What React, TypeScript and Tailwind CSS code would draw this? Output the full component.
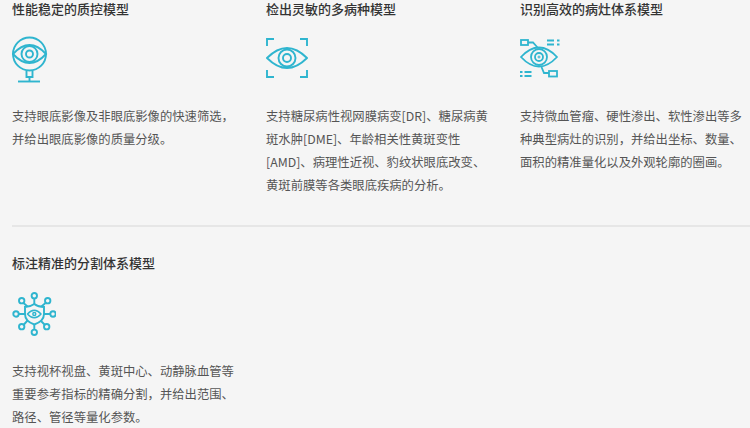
const cyan = '#2fb5cf';

function QualityIcon() {
  return (
    <svg width="38" height="48" viewBox="0 0 38 48" fill="none" stroke={cyan} strokeWidth="1.900">
      <circle cx="17.500" cy="18" r="16.500" />
      <path d="M1 18C6.500 12 12 9 17.500 9S28.500 12 34 18C28.500 24 23 27 17.500 27S6.500 24 1 18Z" />
      <circle cx="17.500" cy="18" r="8" />
      <circle cx="17.500" cy="18" r="3.500" />
      <path d="M14.500 35V41H20.500V35" />
      <path d="M17.500 41V45" />
      <path d="M6 45.500H28" />
    </svg>
  );
}

function ScanIcon() {
  return (
    <svg width="42" height="48" viewBox="0 -2 42 48" fill="none" stroke={cyan} strokeWidth="1.900">
      <path d="M1 8V1H8M34 1H41V8M1 32V39H8M34 39H41V32" />
      <path d="M1 20C8 13 14 10 21 10S34 13 41 20C34 27 28 30 21 30S8 27 1 20Z" />
      <circle cx="21" cy="20" r="8.500" />
      <circle cx="21" cy="20" r="4" />
    </svg>
  );
}

function LesionIcon() {
  return (
    <svg width="40" height="48" viewBox="0 -3 40 48" fill="none" stroke={cyan} strokeWidth="1.800">
      <rect x="1" y="1" width="7" height="5" />
      <path d="M8 3.500H13L18 9" />
      <path d="M27 1.500H34M27 5.500H34M37 1.500H39.500M37 5.500H39.500" />
      <path d="M1 18C7 11.500 13 8.500 19 8.500S31 11.500 37 18C31 24.500 25 27.500 19 27.500S7 24.500 1 18Z" />
      <circle cx="19" cy="18" r="8" />
      <circle cx="19" cy="18" r="4" />
      <circle cx="19" cy="18" r="1" strokeWidth="1" />
      <path d="M21.500 28L24 34H29" />
      <rect x="29" y="32" width="8" height="5.500" />
      <path d="M0 33H2.500M0 37H2.500M4.500 33H11.500M4.500 37H11.500" />
    </svg>
  );
}

function SegmentIcon() {
  return (
    <svg width="44" height="44" viewBox="0 0 44 44" fill="none" stroke={cyan} strokeWidth="1.900">
      <circle cx="22.300" cy="3.700" r="2.700" />
      <circle cx="9.700" cy="8.700" r="2.700" />
      <circle cx="35.700" cy="8.700" r="2.700" />
      <circle cx="4" cy="22" r="2.700" />
      <circle cx="41" cy="22" r="2.700" />
      <circle cx="9.700" cy="34.700" r="2.700" />
      <circle cx="34.700" cy="34.700" r="2.700" />
      <circle cx="22.300" cy="40.300" r="2.700" />
      <path d="M22.300 6.500V12M11.500 11L15.500 14.500M33.500 11L29.500 14.500M6.800 22H13M32 22H38.200M11.500 33L15.500 28.500M33 33L28.500 28.500M22.300 32V37.500" />
      <path d="M22.300 12C25 14 28.500 15 32 15V22C32 27 28 30.500 22.300 32.500C16.500 30.500 13 27 13 22V15C16 15 19.500 14 22.300 12Z" />
      <path d="M15.500 22C18 19 20 18.200 22.300 18.200S26.500 19 29 22C26.500 25 24.500 25.800 22.300 25.800S18 25 15.500 22Z" strokeWidth="1.400" />
      <circle cx="22.300" cy="22" r="1.500" strokeWidth="1.400" />
    </svg>
  );
}

const topItems = [
  {
    title: '性能稳定的质控模型',
    icon: <QualityIcon />,
    lines: ['支持眼底影像及非眼底影像的快速筛选，', '并给出眼底影像的质量分级。'],
  },
  {
    title: '检出灵敏的多病种模型',
    icon: <ScanIcon />,
    lines: [
      '支持糖尿病性视网膜病变[DR]、糖尿病黄',
      '斑水肿[DME]、年龄相关性黄斑变性',
      '[AMD]、病理性近视、豹纹状眼底改变、',
      '黄斑前膜等各类眼底疾病的分析。',
    ],
  },
  {
    title: '识别高效的病灶体系模型',
    icon: <LesionIcon />,
    lines: [
      '支持微血管瘤、硬性渗出、软性渗出等多',
      '种典型病灶的识别，并给出坐标、数量、',
      '面积的精准量化以及外观轮廓的圈画。',
    ],
  },
];

function Lines({ lines }: { lines: string[] }) {
  return (
    <div className="text-[12.33px] leading-[23px] text-[#555555] whitespace-nowrap">
      {lines.map((line) => (
        <p key={line}>{line}</p>
      ))}
    </div>
  );
}

export default function App() {
  return (
    <div
      className="w-[750px] h-[428px] overflow-hidden bg-[#f5f5f5]"
      style={{ fontFamily: '"Noto Sans CJK SC", "Noto Sans", sans-serif' }}
    >
      <div className="h-[225px] grid grid-cols-[254px_254px_242px] pl-[12px]">
        {topItems.map((item) => (
          <div key={item.title}>
            <h3 className="text-[13px] leading-[18px] font-medium text-[#333333]">{item.title}</h3>
            <div className="h-[48px] mt-[18px] mb-[21px] flex items-center">{item.icon}</div>
            <Lines lines={item.lines} />
          </div>
        ))}
      </div>
      <div className="h-[2px] ml-[12px] bg-[#e6e6e6]" />
      <div className="pl-[12px] pt-[27px]">
        <h3 className="text-[13px] leading-[18px] font-medium text-[#333333]">标注精准的分割体系模型</h3>
        <div className="h-[44px] mt-[20px] mb-[24px] flex items-center">
          <SegmentIcon />
        </div>
        <Lines
          lines={[
            '支持视杯视盘、黄斑中心、动静脉血管等',
            '重要参考指标的精确分割，并给出范围、',
            '路径、管径等量化参数。',
          ]}
        />
      </div>
    </div>
  );
}
